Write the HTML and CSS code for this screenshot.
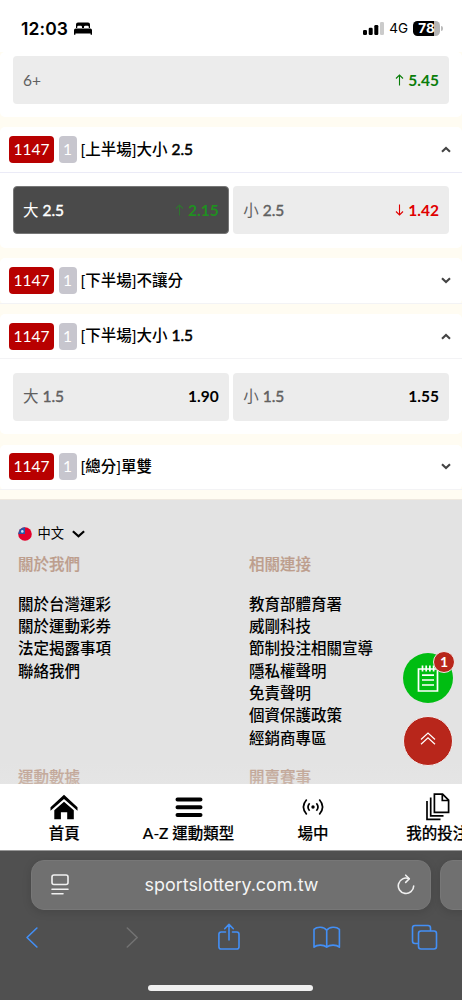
FILE: index.html
```html
<!DOCTYPE html>
<html lang="zh-Hant">
<head>
<meta charset="utf-8">
<meta name="viewport" content="width=device-width, initial-scale=1">
<title>台灣運彩</title>
<link rel="stylesheet" href="styles.css">
</head>
<body>
<div class="phone">
  <header class="status">
    <span class="clock">12:03</span>
    <svg class="bed" width="18" height="13" viewBox="0 0 18 13"><path d="M2 6V2.6Q2 .5 4 .5h10q2 0 2 2.1V6h-1.2V5q0-1.2-1.2-1.2h-2.4Q10 3.800 10 5v1H8V5q0-1.200-1.200-1.200H4.400Q3.200 3.800 3.200 5v1z"/><path d="M0 8.200Q0 6.500 1.700 6.500h14.600Q18 6.500 18 8.200v4.600h-1.400v-1.300H1.400v1.300H0z"/></svg>
    <span class="grow"></span>
    <svg class="signal" width="21" height="13" viewBox="0 0 21 13"><rect y="8" width="4" height="5" rx="1.200"/><rect x="5.700" y="5.700" width="4" height="7.300" rx="1.200"/><rect x="11.300" y="3" width="4" height="10" rx="1.200"/><rect x="17" y="0" width="4" height="13" rx="1.200" fill="#cbcbcb"/></svg>
    <span class="net">4G</span>
    <span class="battery">78</span><i class="nub"></i>
  </header>

  <main class="markets">
    <section class="card first">
      <div class="odds"><div class="pick"><span class="label">6+</span><span class="price up"><svg width="9" height="12" viewBox="0 0 9 12"><path d="M4.500 11.500V1M1 4.500 4.500 1 8 4.500"/></svg>5.45</span></div></div>
    </section>
    <section class="card">
      <div class="head lav"><b class="code">1147</b><b class="min">1</b><h2>[上半場]大小 <b>2.5</b></h2><svg class="chev" width="10" height="7" viewBox="0 0 10 7"><path d="M1 5.800 5 1.900l4 3.900"/></svg></div>
      <div class="odds"><div class="pick on"><span class="label">大 <b>2.5</b></span><span class="price up"><svg width="9" height="12" viewBox="0 0 9 12"><path d="M4.500 11.500V1M1 4.500 4.500 1 8 4.500"/></svg>2.15</span></div><div class="pick"><span class="label">小 <b>2.5</b></span><span class="price down"><svg width="9" height="12" viewBox="0 0 9 12"><path d="M4.500 .500V11M1 7.500 4.500 11 8 7.500"/></svg>1.42</span></div></div>
    </section>
    <section class="card">
      <div class="head"><b class="code">1147</b><b class="min">1</b><h2>[下半場]不讓分</h2><svg class="chev" width="10" height="7" viewBox="0 0 10 7"><path d="M1 1.200 5 5.100l4-3.900"/></svg></div>
    </section>
    <section class="card">
      <div class="head"><b class="code">1147</b><b class="min">1</b><h2>[下半場]大小 <b>1.5</b></h2><svg class="chev" width="10" height="7" viewBox="0 0 10 7"><path d="M1 5.800 5 1.900l4 3.900"/></svg></div>
      <div class="odds"><div class="pick"><span class="label">大 <b>1.5</b></span><span class="price">1.90</span></div><div class="pick"><span class="label">小 <b>1.5</b></span><span class="price">1.55</span></div></div>
    </section>
    <section class="card">
      <div class="head"><b class="code">1147</b><b class="min">1</b><h2>[總分]單雙</h2><svg class="chev" width="10" height="7" viewBox="0 0 10 7"><path d="M1 1.200 5 5.100l4-3.900"/></svg></div>
    </section>
  </main>

  <footer class="foot">
    <div class="lang">
      <svg width="14" height="14" viewBox="0 0 14 14"><circle cx="7" cy="7" r="6.800" fill="#e4002b"/><path d="M7 .200A6.800 6.800 0 0 0 .200 7H7z" fill="#2857a8"/><circle cx="4.300" cy="4.400" r="1.300" fill="#cfe0f5"/></svg>
      <span>中文</span>
      <svg class="caret" width="13" height="8" viewBox="0 0 13 8"><path d="M.900 1.200 6.500 6.300l5.600-5.100"/></svg>
    </div>
    <div class="cols">
      <div>
        <h3>關於我們</h3>
        <ul><li>關於台灣運彩</li><li>關於運動彩券</li><li>法定揭露事項</li><li>聯絡我們</li></ul>
      </div>
      <div>
        <h3>相關連接</h3>
        <ul><li>教育部體育署</li><li>威剛科技</li><li>節制投注相關宣導</li><li>隱私權聲明</li><li>免責聲明</li><li>個資保護政策</li><li>經銷商專區</li></ul>
      </div>
      <h3>運動數據</h3>
      <h3>開賣賽事</h3>
    </div>
    <div class="shade"></div>
  </footer>

  <nav class="tabs">
    <div><svg width="28" height="26" viewBox="0 0 28 26"><path d="M.500 13.300 14 .800l13.500 12.500v3.500L14 5 .500 16.800z"/><path d="M4.300 16.200 14 7.700l9.800 8.500v9h-6.600v-7h-6.300v7H4.300z"/></svg><span>首頁</span></div>
    <div><svg width="28" height="26" viewBox="0 0 28 26"><path d="M2.500 5.500h23M2.500 13.200h23M2.500 20.900h23" stroke="#000" stroke-width="4" stroke-linecap="round"/></svg><span>A-Z 運動類型</span></div>
    <div><svg width="28" height="26" viewBox="0 0 28 26"><circle cx="14" cy="13" r="1.700"/><path d="M10.600 9.200q-3.200 3.800 0 7.600M17.400 9.200q3.200 3.800 0 7.600M7.700 5.500q-6.600 7.500 0 15M20.300 5.500q6.600 7.500 0 15" fill="none" stroke="#000" stroke-width="1.700"/></svg><span>場中</span></div>
    <div><svg width="28" height="28" viewBox="0 0 28 28"><g fill="none" stroke="#000" stroke-width="1.700"><path d="M11.400 1.200h8.200l6 6v12.200H11.400zM19.300 1.500v6h6M7.700 4.500v18.300h12.800M4 8v18.300h13.500"/></g></svg><span>我的投注</span></div>
  </nav>

  <div class="browser">
    <div class="urls">
      <div class="url">
        <svg width="18" height="21" viewBox="0 0 18 21"><g fill="none" stroke="#f0f0f0" stroke-width="1.600" stroke-linecap="round"><rect x="1" y="1" width="16" height="9.500" rx="2"/><path d="M1 15.200h16M1 19.800h11"/></g></svg>
        <span>sportslottery.com.tw</span>
        <svg width="18" height="22" viewBox="0 0 18 22"><g fill="none" stroke="#f0f0f0" stroke-width="1.600" stroke-linecap="round" stroke-linejoin="round"><path d="M12 4.700A7.700 7.700 0 1 0 16.700 12"/><path d="M8.700 1.200 12.300 4.800 8.700 8.400"/></g></svg>
      </div>
      <div class="url next"></div>
    </div>
    <div class="tools">
      <svg width="28" height="28" viewBox="0 0 28 28"><path d="m17.900 5-9.900 9.500 9.900 9.500" stroke-width="2"/></svg>
      <svg class="dim" width="28" height="28" viewBox="0 0 28 28"><path d="m10.300 5 9.900 9.500L10.300 24" stroke-width="1.600"/></svg>
      <svg width="28" height="28" viewBox="0 0 28 28"><path d="M10.500 9H6.200q-2.300 0-2.300 2.300v12.400Q3.900 26 6.200 26h15.500q2.300 0 2.300-2.300V11.300Q24 9 21.700 9H17.500M14 17V1.500M9.700 5.700 14 1.400l4.300 4.300"/></svg>
      <svg width="28" height="28" viewBox="0 0 28 28"><path d="M13.700 7.200C11 3.500 4 3.500 1 6.300V24.200c3-2.800 9.700-2.800 12.700 0 3-2.800 9.700-2.800 12.700 0V6.300c-3-2.800-10-2.800-12.700.900zV24"/></svg>
      <svg width="28" height="28" viewBox="0 0 28 28"><path d="M6.500 20.500H4q-2.500 0-2.500-2.500V5Q1.500 2.500 4 2.500h13q2.500 0 2.500 2.500v2.500"/><rect x="7.500" y="8" width="18" height="18" rx="2.500"/></svg>
    </div>
    <div class="home"></div>
  </div>

  <div class="slip">
    <svg width="22" height="27" viewBox="0 0 22 27"><g fill="none" stroke="#fff" stroke-width="1.700"><path d="M1.500 4h19v22h-19zM5.500 .500v6M9.200 .500v6M12.900 .500v6M16.600 .500v6M5 10.200h12M5 15h12M5 20h12"/></g></svg>
    <b class="count">1</b>
  </div>
  <div class="totop"><svg width="16" height="13" viewBox="0 0 16 13"><path d="m1 7.500 7-6.500 7 6.500M1 12.300l7-6.500 7 6.500" fill="none" stroke="#fff" stroke-width="1.200"/></svg></div>
</div>
</body>
</html>
```
FILE: styles.css
```css
* { box-sizing: border-box; margin: 0; padding: 0; }
body { background: #fff; font-family: Lato, "Noto Sans CJK TC", sans-serif; font-size: 15.5px; color: #000; }
svg { display: block; flex: none; }
.phone { position: relative; width: 462px; height: 1000px; overflow: hidden; display: flex; flex-direction: column; }

.status { height: 52px; flex: none; display: flex; align-items: center; padding: 4px 21px 0 21px; font-family: Inter, sans-serif; }
.clock { font-size: 17.5px; font-weight: 600; letter-spacing: .1px; }
.bed { margin-left: 6px; }
.grow { flex: 1; }
.net { font-size: 13.5px; font-weight: 400; margin: 0 5px 0 5px; }
.battery { width: 27px; height: 15px; border-radius: 4.500px; background: linear-gradient(90deg, #000 21px, #b5b5b5 21px); color: #fff; font-size: 13.5px; font-weight: 700; line-height: 15px; text-align: center; }
.nub { width: 2px; height: 5px; margin-left: 1px; border-radius: 0 2px 2px 0; background: #bbb; margin-right: -2px; }

.markets { flex: none; height: 447px; background: #fffcf2; display: flex; flex-direction: column; gap: 10.300px; }
.card { background: #fff; border-radius: 5px; }
.first { height: 65px; padding-top: 4px; }
.first .odds { padding-top: 0; }
.head { height: 45.500px; display: flex; align-items: center; padding: 0 11px 0 9px; border-bottom: 1px solid #f3f3f5; }
.lav { border-color: #ebebf7; }
.code, .min { height: 27px; line-height: 27px; border-radius: 4px; color: #fff; font-weight: 400; text-align: center; }
.code { width: 45px; background: #b80000; }
.min { width: 18px; margin: 0 4px 0 4.500px; background: #c7c6ce; }
h2 { flex: 1; font-size: 15.5px; line-height: 22px; padding-bottom: 1.500px; font-weight: 500; white-space: nowrap; }
h2 b { font-weight: 400; -webkit-text-stroke: .5px #000; }
.chev path, .caret path { fill: none; stroke: #444; stroke-width: 2.100; }
.caret path { stroke: #000; stroke-width: 2.200; }
.odds { display: flex; gap: 4.500px; padding: 13.500px 13px; }
.pick { flex: 1; height: 48px; border-radius: 4px; background: #ececec; display: flex; align-items: center; justify-content: space-between; padding: 0 10px; }
.label { color: #606060; line-height: 22px; padding-bottom: 1px; }
.label b { font-weight: 400; -webkit-text-stroke: .4px currentColor; }
.price { display: flex; align-items: center; gap: 4.500px; font-weight: 700; padding-bottom: 1px; }
.price svg path { fill: none; stroke: currentColor; stroke-width: 1.100; }
.up { color: #0a7d0a; }
.down { color: #e00000; }
.on { background: #4a4a4a; border: 1px solid #777; padding: 0 9px; }
.on .label { color: #fff; }
.on .up { color: #209020; }
.on svg { opacity: .6; }

.foot { position: relative; height: 285px; flex: none; background: #e3e3e3; border-top: 1px solid #eee8df; overflow: hidden; padding: 23.500px 18px 0; }
.lang { display: flex; align-items: center; height: 20px; font-size: 13.300px; }
.lang span { margin: 0 8px 2px 5.500px; }
.cols { display: grid; grid-template-columns: 231px 1fr; padding-top: 8px; }
h3 { color: #bd9e8d; font-size: 15.500px; line-height: 24px; font-weight: 500; -webkit-text-stroke: .2px currentColor; }
ul { list-style: none; padding: 17px 0 16.500px; }
li { height: 22.350px; line-height: 22.350px; font-weight: 500; white-space: nowrap; }
.shade { position: absolute; left: 0; right: 0; bottom: 0; height: 22px; background: linear-gradient(#e3e3e300, #e9e9e94d); }

.tabs { height: 66px; flex: none; display: flex; width: 500px; padding-left: 2px; background: #fff; font-weight: 500; }
.tabs div { flex: none; width: 124.400px; display: flex; flex-direction: column; align-items: center; padding-top: 9px; }
.tabs svg { height: 28px; margin-bottom: 1px; }
.tabs span { line-height: 23px; white-space: nowrap; -webkit-text-stroke: .15px #000; }

.browser { flex: 1; background: #505050; border-top: 1px solid #989898; }
.urls { display: flex; gap: 9px; padding: 8.500px 0 0 31px; }
.url { flex: none; width: 400px; height: 50.500px; border-radius: 13px; background: #707070; border: 1px solid #777; box-shadow: 0 2px 10px #0002; color: #f4f4f4; display: flex; align-items: center; justify-content: space-between; padding: 0 15px 0 19px; font: 400 17.900px Inter, sans-serif; }
.url span { margin-left: -3px; }
.tools { display: flex; justify-content: space-between; padding: 13px 23px 0 19px; }
.tools path, .tools rect { fill: none; stroke: #438ff5; stroke-width: 1.600; stroke-linecap: round; stroke-linejoin: round; }
.tools .dim path { stroke: #727272; }
.home { width: 165px; height: 6px; border-radius: 3px; background: #f0f0f0; margin: 34px 0 0 148px; }

.slip, .totop { position: absolute; display: grid; place-items: center; border-radius: 50%; }
.slip { left: 403px; top: 653px; width: 50px; height: 50px; background: #00bd12; }
.slip svg { margin-top: 1px; }
.count { position: absolute; left: 30px; top: -2px; width: 22px; height: 22px; border-radius: 50%; background: #b8261b; border: 1px solid #f0e9e8; color: #fff; font-size: 14px; line-height: 20px; text-align: center; }
.totop { left: 403px; top: 715.500px; width: 50px; height: 50px; background: #b8261b; border: 1.200px solid #f2eeee; }
.totop svg { margin-top: -4px; }
```
